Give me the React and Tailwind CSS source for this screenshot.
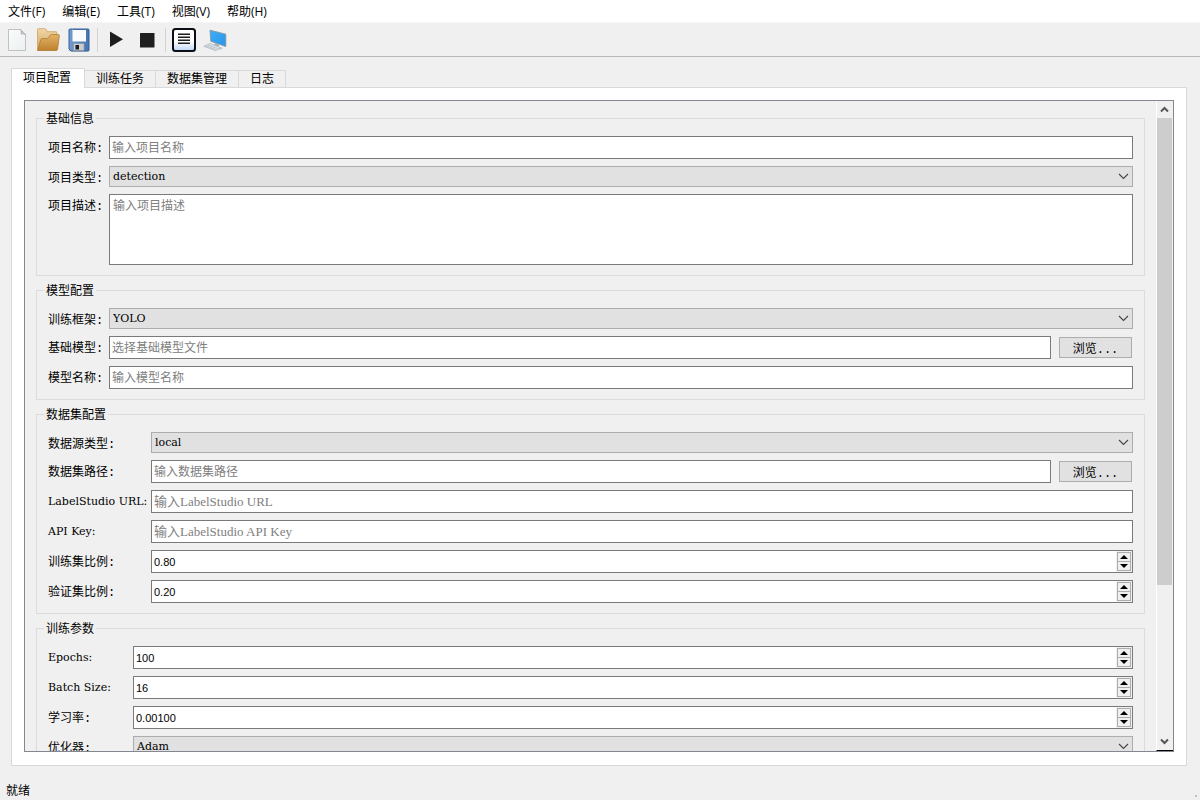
import React, { useState } from "react";

const menus = ["文件(F)", "编辑(E)", "工具(T)", "视图(V)", "帮助(H)"];
const tabs = ["项目配置", "训练任务", "数据集管理", "日志"];

/* ---------- toolbar icons ---------- */

function NewIcon() {
  return (
    <svg width="24" height="24" viewBox="0 0 24 24">
      <defs>
        <linearGradient id="page" x1="0" y1="0" x2="1" y2="1">
          <stop offset="0" stopColor="#fbfcfc" />
          <stop offset="1" stopColor="#eceff0" />
        </linearGradient>
      </defs>
      <path d="M3.500 1.500h12l5 5v16h-17z" fill="url(#page)" stroke="#bcc1c3" />
      <path d="M15.500 1.500c1 1.500 1 3 .5 4.500 1.500-.3 3-.2 4.500.5z" fill="#d5dadc" stroke="#a8adb0" />
    </svg>
  );
}

function OpenIcon() {
  return (
    <svg width="24" height="24" viewBox="0 0 24 24">
      <defs>
        <linearGradient id="folderBack" x1="0" y1="0" x2="0" y2="1">
          <stop offset="0" stopColor="#f0d6a6" />
          <stop offset="1" stopColor="#cfa563" />
        </linearGradient>
        <linearGradient id="folderFront" x1="0" y1="0" x2="0" y2="1">
          <stop offset="0" stopColor="#e3b467" />
          <stop offset="1" stopColor="#bd812c" />
        </linearGradient>
      </defs>
      <path d="M1.500 22V1.500q0-.8.800-.8h6.500q1 0 1.500 1l.7 2h9q.8 0 .8.800V21z" fill="url(#folderBack)" stroke="#d0a869" strokeWidth=".9" />
      <path d="M1.600 22.500L4.800 11.500q.3-.9 1.200-.9h5.500q.7 0 1.100-.7l1.500-2.600q.4-.7 1.200-.7h7.200q.9 0 .8.900l-1.700 13.700q-.2 1.300-1.500 1.300z" fill="url(#folderFront)" stroke="#b5803a" strokeWidth=".9" />
    </svg>
  );
}

function SaveIcon() {
  return (
    <svg width="24" height="24" viewBox="0 0 24 24">
      <defs>
        <linearGradient id="floppy" x1="0" y1="0" x2="1" y2="0">
          <stop offset="0" stopColor="#6f9bd0" />
          <stop offset="1" stopColor="#4473b0" />
        </linearGradient>
      </defs>
      <ellipse cx="12" cy="22.500" rx="11" ry="1.300" fill="#c9c9c9" />
      <path d="M3 1h18q1 0 1 1v20q0 1-1 1H4l-2-2V2q0-1 1-1z" fill="url(#floppy)" stroke="#36619b" />
      <rect x="5.500" y="1" width="13.500" height="12.500" fill="#fafbfd" />
      <rect x="5.500" y="1" width="13.500" height="1" fill="#3e6db0" />
      <rect x="6.500" y="15.500" width="10.500" height="7" fill="#c9ccd0" stroke="#8d9299" strokeWidth=".6" />
      <rect x="8.500" y="17" width="3.500" height="4.500" fill="#1c1c1c" />
    </svg>
  );
}

function PlayIcon() {
  return (
    <svg width="24" height="24" viewBox="0 0 24 24">
      <path d="M6 3.500l13 7.800L6 19z" fill="#1d1d1d" />
    </svg>
  );
}

function StopIcon() {
  return (
    <svg width="24" height="24" viewBox="0 0 24 24">
      <rect x="5" y="5" width="14.500" height="14.500" rx=".5" fill="#1f1f1f" />
    </svg>
  );
}

function LogIcon() {
  return (
    <svg width="24" height="24" viewBox="0 0 24 24">
      <defs>
        <linearGradient id="logBg" x1="0" y1="0" x2="0" y2="1">
          <stop offset=".55" stopColor="#ffffff" />
          <stop offset="1" stopColor="#bcd6f6" />
        </linearGradient>
      </defs>
      <rect x="1" y="1" width="22" height="22" rx="2.500" fill="url(#logBg)" stroke="#0b0f15" strokeWidth="2" />
      <path d="M6 6.300h12M6 9.300h12M6 12.300h12M6 15.300h12" stroke="#1d1d1d" strokeWidth="1.500" />
    </svg>
  );
}

function ComputerIcon() {
  return (
    <svg width="24" height="24" viewBox="0 0 24 24">
      <defs>
        <linearGradient id="screen" x1="0" y1="0" x2="1" y2="1">
          <stop offset="0" stopColor="#3fb0f8" />
          <stop offset="1" stopColor="#2a93e8" />
        </linearGradient>
      </defs>
      <path d="M7 2.200l15.800 4v12.300L7.800 13.300z" fill="url(#screen)" stroke="#8595a1" strokeWidth=".9" />
      <path d="M12 15l4.500 1.600-1 2-4.500-1.600z" fill="#a9b2b9" />
      <path d="M.8 18.300l6-2.800 11 4.200-5 3z" fill="#dfe4e8" stroke="#a7afb6" strokeWidth=".7" />
      <path d="M3 18l9.500 3.400M5 17l9.500 3.500" stroke="#b3bac0" strokeWidth=".7" />
      <path d="M15.800 20.800l2-1.200 1.700.6-2 1.300z" fill="#d3d8dc" stroke="#a7afb6" strokeWidth=".5" />
    </svg>
  );
}

function Chevron({ up, bold }) {
  return (
    <svg width="11" height="7" viewBox="0 0 11 7" fill="none" stroke={bold ? "#555555" : "#444444"} strokeWidth={bold ? 2 : 1.1}>
      {up ? <path d="M2 5.500l3.500-3.500 3.500 3.500" /> : <path d={bold ? "M2 1.500l3.500 3.500 3.500-3.500" : "M1 1l4.500 4.500 4.500-4.500"} />}
    </svg>
  );
}

function ToolButton({ label, children }) {
  return (
    <button type="button" aria-label={label} className="flex w-[31px] items-center justify-center">
      {children}
    </button>
  );
}

function Separator() {
  return (
    <div className="flex w-[6px] justify-center">
      <div className="h-6 w-px bg-[#d4d4d4]" />
    </div>
  );
}

/* ---------- form pieces ---------- */

function Group({ title, children }) {
  return (
    <fieldset className="min-w-0 border border-[#dcdcdc] px-[11px] pb-[10px]">
      <legend className="-ml-1 h-[15px] px-[2px] text-[12px] leading-[18px]">{title}</legend>
      <div className="pt-[10px]">{children}</div>
    </fieldset>
  );
}

function Label({ id, latin, children }) {
  return (
    <label
      htmlFor={id}
      className={
        latin
          ? "h-[23px] self-start whitespace-nowrap font-['DejaVu_Serif',serif] text-[11px] leading-[23px]"
          : "h-[23px] self-start whitespace-nowrap text-[12px] leading-[26px]"
      }
    >
      {children}
    </label>
  );
}

function TextInput({ id, placeholder, mixed }) {
  return (
    <input
      id={id}
      type="text"
      placeholder={placeholder}
      className={
        mixed
          ? "h-[23px] w-full min-w-0 border border-[#7a7a7a] bg-white px-[2px] pt-px font-['Liberation_Serif','Noto_Sans_CJK_SC',serif] text-[13px] outline-none placeholder:text-[#808080]"
          : "h-[23px] w-full min-w-0 border border-[#7a7a7a] bg-white px-[2px] pt-[3px] text-[12px] outline-none placeholder:text-[#808080]"
      }
    />
  );
}

function Select({ id, options }) {
  return (
    <div className="relative">
      <select
        id={id}
        className="block h-[21px] w-full appearance-none border border-[#adadad] bg-[#e1e1e1] px-[3px] pt-[2px] font-['DejaVu_Serif',serif] text-[11px] outline-none"
      >
        {options.map((item) => (
          <option key={item}>{item}</option>
        ))}
      </select>
      <div className="pointer-events-none absolute inset-y-0 right-1 flex items-center">
        <Chevron />
      </div>
    </div>
  );
}

function FileInput({ id, placeholder }) {
  return (
    <div className="flex items-center gap-2">
      <TextInput id={id} placeholder={placeholder} />
      <button type="button" className="mr-px h-[21px] w-[73px] shrink-0 border border-[#adadad] bg-[#e1e1e1] pt-[3px] text-[12px] leading-[18px]">
        浏览...
      </button>
    </div>
  );
}

function SpinInput({ id, initial, step, digits }) {
  const [value, setValue] = useState(initial);

  const change = (delta) => {
    setValue(Math.max(0, Number(value) + delta).toFixed(digits));
  };

  return (
    <div className="flex h-[23px] border border-[#7a7a7a] bg-white">
      <input
        id={id}
        type="text"
        inputMode="decimal"
        value={value}
        onChange={(e) => setValue(e.target.value)}
        className="min-w-0 flex-1 bg-white px-[2px] pt-[2px] font-['Liberation_Sans',sans-serif] text-[11px] outline-none"
      />
      <div className="flex w-4 flex-col bg-[#f0f0f0] p-px">
        <button
          type="button"
          aria-label="增加"
          onClick={() => change(step)}
          className="flex flex-1 items-center justify-center border border-[#adadad] bg-[#f0f0f0]"
        >
          <svg width="8" height="4" viewBox="0 0 8 4">
            <path d="M0 4l4-4 4 4z" />
          </svg>
        </button>
        <button
          type="button"
          aria-label="减少"
          onClick={() => change(-step)}
          className="-mt-px flex flex-1 items-center justify-center border border-[#adadad] bg-[#f0f0f0]"
        >
          <svg width="8" height="4" viewBox="0 0 8 4">
            <path d="M0 0l4 4 4-4z" />
          </svg>
        </button>
      </div>
    </div>
  );
}

function App() {
  const [activeTab, setActiveTab] = useState(0);
  const [thumbTop, setThumbTop] = useState(0);

  const handleScroll = (e) => {
    const { scrollTop, scrollHeight } = e.currentTarget;
    setThumbTop((scrollTop / scrollHeight) * 100);
  };

  return (
    <div className="flex h-screen flex-col bg-[#f0f0f0] font-['Liberation_Mono','Noto_Sans_CJK_SC',monospace] text-[12px] text-black">
      {/* menu bar */}
      <nav className="flex h-[23px] shrink-0 items-center gap-[17px] border-b border-[#f5f5f5] bg-white px-2 pt-[2px] font-['Open_Sans','Noto_Sans_CJK_SC',sans-serif]">
        {menus.map((item) => (
          <button key={item} type="button" className="whitespace-nowrap">
            {item}
          </button>
        ))}
      </nav>

      {/* toolbar */}
      <div className="flex h-[34px] shrink-0 items-center border-b border-[#b8b8b8] pl-px">
        <ToolButton label="新建"><NewIcon /></ToolButton>
        <ToolButton label="打开"><OpenIcon /></ToolButton>
        <ToolButton label="保存"><SaveIcon /></ToolButton>
        <Separator />
        <ToolButton label="开始"><PlayIcon /></ToolButton>
        <ToolButton label="停止"><StopIcon /></ToolButton>
        <Separator />
        <ToolButton label="日志"><LogIcon /></ToolButton>
        <ToolButton label="设备"><ComputerIcon /></ToolButton>
      </div>

      <main className="flex min-h-0 flex-1 flex-col px-[11px] pt-[11px]">
        <div role="tablist" className="z-10 -mb-px flex shrink-0 items-end">
          {tabs.map((item, index) => (
            <button
              key={item}
              type="button"
              role="tab"
              aria-selected={activeTab === index}
              onClick={() => setActiveTab(index)}
              className={
                activeTab === index
                  ? "h-5 border border-b-0 border-[#d9d9d9] bg-white pt-px pr-[13px] pl-[11px]"
                  : "h-[18px] border-t border-r border-b border-[#d9d9d9] px-[11px] pt-[2px] leading-[14px]"
              }
            >
              {item}
            </button>
          ))}
        </div>

        <div className="mr-[2px] flex min-h-0 flex-1 border border-[#d9d9d9] bg-white p-3 pb-[13px]">
          <div className="flex min-h-0 flex-1 border border-[#828790] bg-[#f0f0f0]">
            <div
              onScroll={handleScroll}
              className="min-w-0 flex-1 overflow-y-auto px-[11px] pt-[10px] [scrollbar-width:none]"
            >
              <form className="flex flex-col gap-[7px] pb-24">
                <Group title="基础信息">
                  <div className="grid grid-cols-[61px_1fr] gap-y-[7px]">
                    <Label id="name">项目名称:</Label>
                    <TextInput id="name" placeholder="输入项目名称" />
                    <div className="flex h-[21px] items-center">
                      <Label id="type">项目类型:</Label>
                    </div>
                    <Select id="type" options={["detection"]} />
                    <Label id="desc">项目描述:</Label>
                    <textarea
                      id="desc"
                      placeholder="输入项目描述"
                      className="block h-[71px] w-full resize-none border border-[#7a7a7a] bg-white px-[3px] py-1 text-[12px] leading-4 outline-none placeholder:text-[#808080]"
                    />
                  </div>
                </Group>

                <Group title="模型配置">
                  <div className="grid grid-cols-[61px_1fr] gap-y-[7px]">
                    <div className="flex h-[21px] items-center">
                      <Label id="framework">训练框架:</Label>
                    </div>
                    <Select id="framework" options={["YOLO"]} />
                    <Label id="model">基础模型:</Label>
                    <FileInput id="model" placeholder="选择基础模型文件" />
                    <Label id="modelName">模型名称:</Label>
                    <TextInput id="modelName" placeholder="输入模型名称" />
                  </div>
                </Group>

                <Group title="数据集配置">
                  <div className="grid grid-cols-[103px_1fr] gap-y-[7px]">
                    <div className="flex h-[21px] items-center">
                      <Label id="source">数据源类型:</Label>
                    </div>
                    <Select id="source" options={["local"]} />
                    <Label id="path">数据集路径:</Label>
                    <FileInput id="path" placeholder="输入数据集路径" />
                    <Label id="url" latin>LabelStudio URL:</Label>
                    <TextInput id="url" placeholder="输入LabelStudio URL" mixed />
                    <Label id="key" latin>API Key:</Label>
                    <TextInput id="key" placeholder="输入LabelStudio API Key" mixed />
                    <Label id="train">训练集比例:</Label>
                    <SpinInput id="train" initial="0.80" step={0.05} digits={2} />
                    <Label id="val">验证集比例:</Label>
                    <SpinInput id="val" initial="0.20" step={0.05} digits={2} />
                  </div>
                </Group>

                <Group title="训练参数">
                  <div className="grid grid-cols-[85px_1fr] gap-y-[7px]">
                    <Label id="epochs" latin>Epochs:</Label>
                    <SpinInput id="epochs" initial="100" step={1} digits={0} />
                    <Label id="batch" latin>Batch Size:</Label>
                    <SpinInput id="batch" initial="16" step={1} digits={0} />
                    <Label id="lr">学习率:</Label>
                    <SpinInput id="lr" initial="0.00100" step={0.0001} digits={5} />
                    <div className="flex h-[21px] items-center">
                      <Label id="optimizer">优化器:</Label>
                    </div>
                    <Select id="optimizer" options={["Adam"]} />
                  </div>
                </Group>
              </form>
            </div>

            {/* scroll bar */}
            <div className="flex w-[17px] shrink-0 flex-col border-b border-l border-b-black border-l-white pr-px">
              <div className="flex h-[17px] items-center justify-center">
                <Chevron up bold />
              </div>
              <div className="relative flex-1">
                <div className="absolute inset-x-0 h-[76%] bg-[#cdcdcd]" style={{ top: `${thumbTop}%` }} />
              </div>
              <div className="flex h-[17px] items-center justify-center">
                <Chevron bold />
              </div>
            </div>
          </div>
        </div>
      </main>

      {/* status bar */}
      <footer className="mt-3 flex h-[22px] shrink-0 items-center justify-between pt-[3px] pr-[3px] pl-[6px] font-['Open_Sans','Noto_Sans_CJK_SC',sans-serif]">
        <span>就绪</span>
        <span className="mb-[3px] h-[2px] w-[2px] self-end bg-[#bfbfbf]" />
      </footer>
    </div>
  );
}

export default App;
